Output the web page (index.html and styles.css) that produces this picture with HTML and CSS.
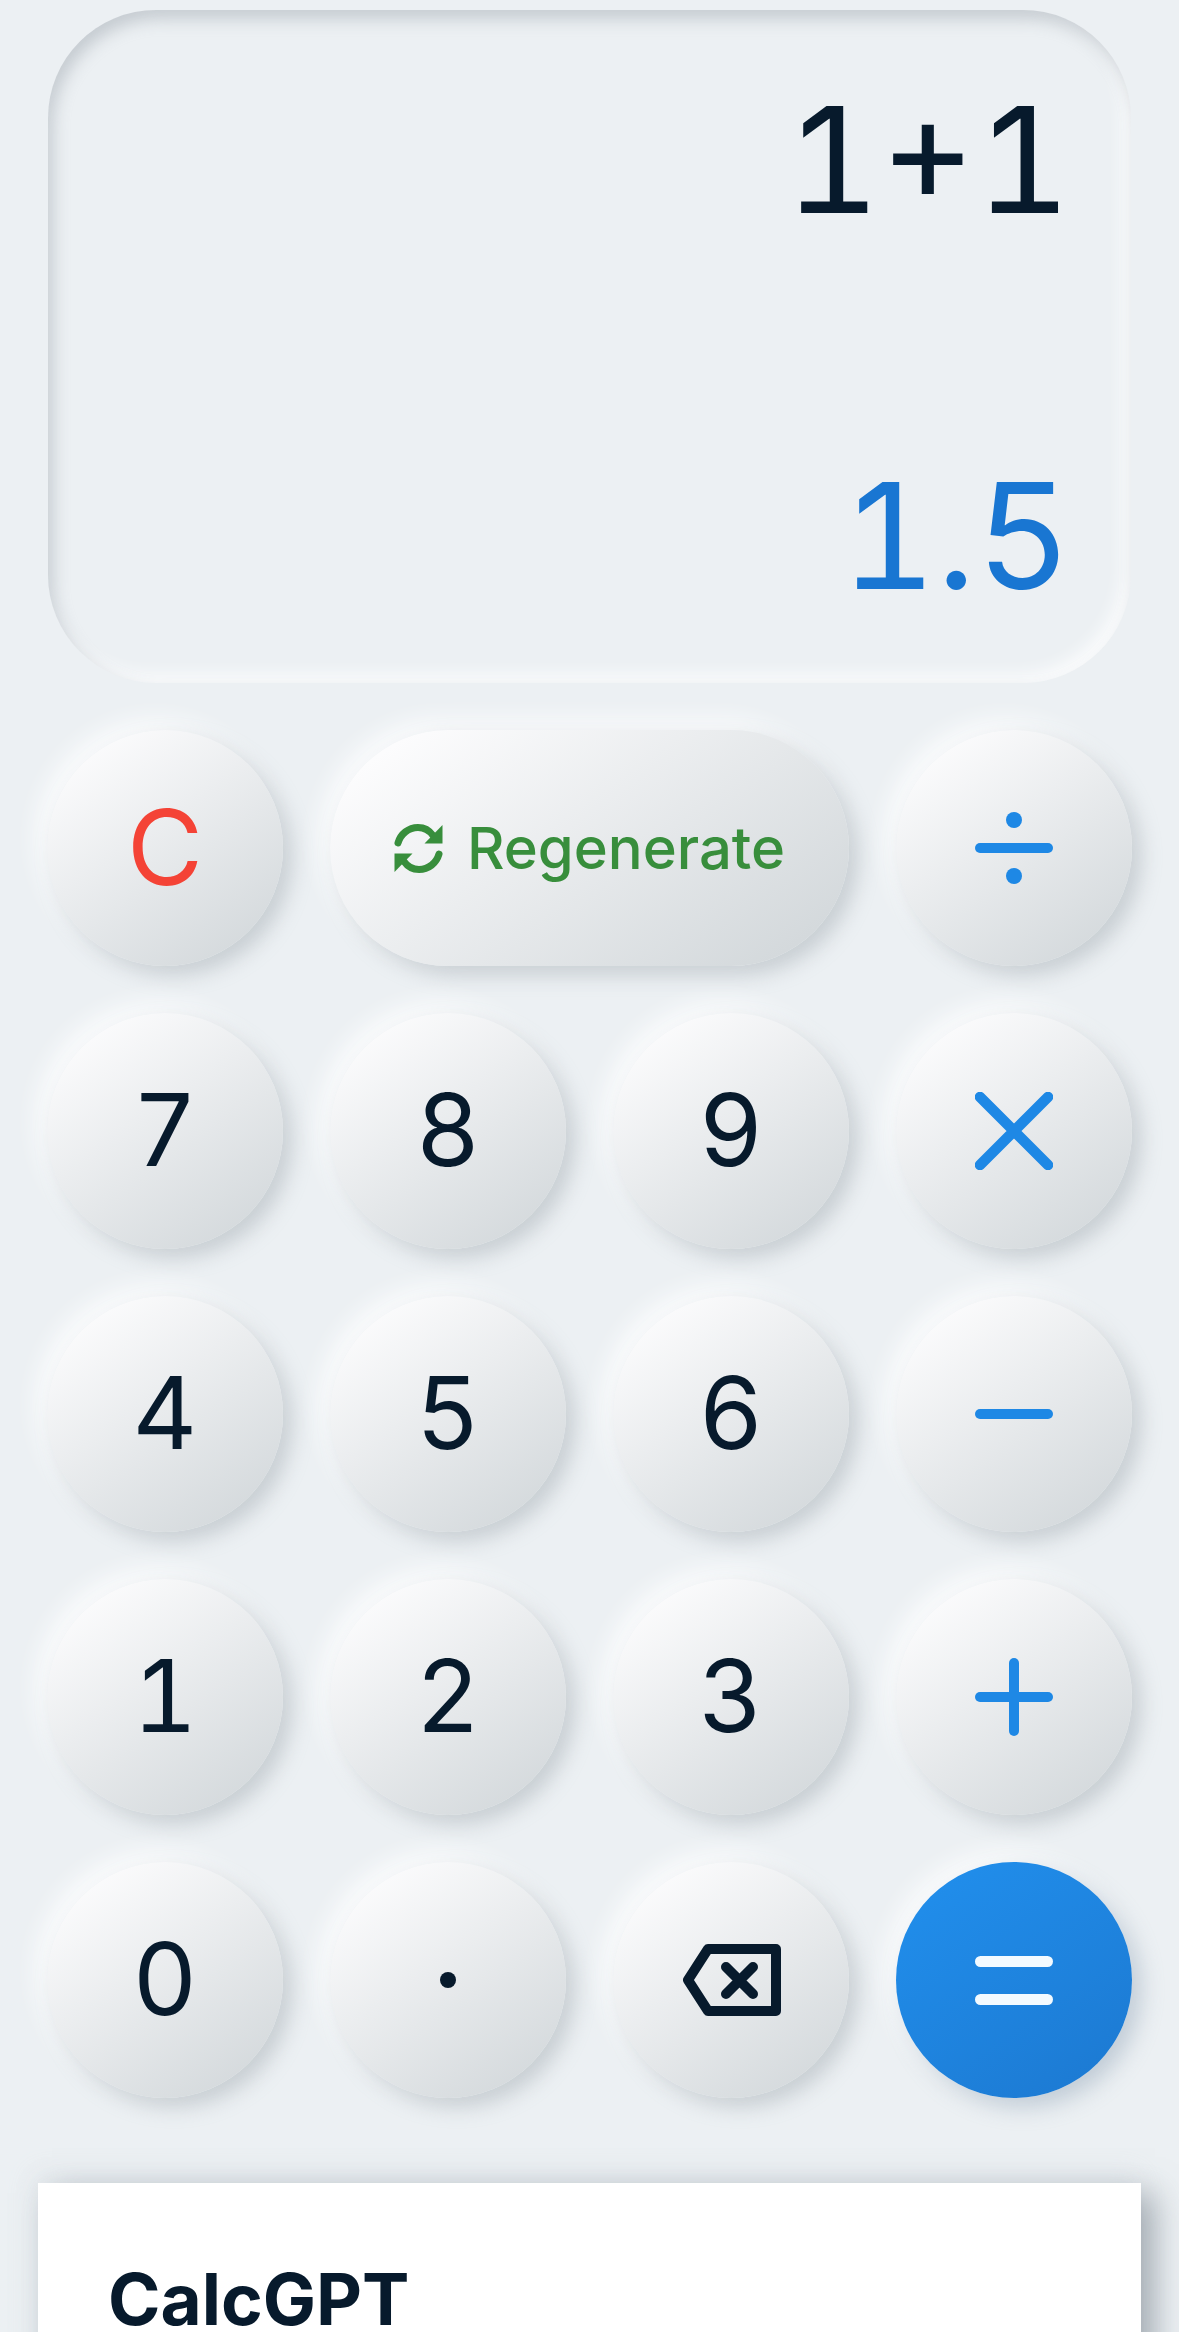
FILE: index.html
```html
<!DOCTYPE html>
<html lang="en">
<head>
    <meta charset="UTF-8">
    <meta name="viewport" content="width=device-width, initial-scale=1.0">
    <title>CalcGPT</title>
    <link rel="stylesheet" href="styles.css">
</head>
<body>
<div class="app">
    <!-- Display -->
    <div class="display">
        <div class="expression">1+1</div>
        <div class="result">1.5</div>
    </div>

    <!-- Keypad -->
    <div class="keypad">
        <button class="key clear">C</button>
        <button class="key regen">
            <svg class="regen-icon" viewBox="0 0 49 51">
                <g id="regenHalf">
                    <path d="M4 20C6.500 11 14.500 4.500 24 4.500C30.500 4.500 35.500 7.500 39 12.500" fill="none" stroke="#388e3c" stroke-width="7" stroke-linecap="round"/>
                    <polygon points="48.500,2 48.500,20.500 30.500,20.500" fill="#388e3c"/>
                </g>
                <use href="#regenHalf" transform="rotate(180 24.500 25.500)"/>
            </svg>
            Regenerate
        </button>
        <button class="key op">
            <svg class="op-icon" viewBox="0 0 78 78">
                <circle cx="39" cy="11" r="8"/>
                <rect x="0" y="34" width="78" height="10" rx="5"/>
                <circle cx="39" cy="67" r="8"/>
            </svg>
        </button>

        <button class="key">7</button>
        <button class="key">8</button>
        <button class="key">9</button>
        <button class="key op">
            <svg class="op-icon" viewBox="0 0 78 78">
                <path d="M5 5L73 73M73 5L5 73" fill="none" stroke="#1e88e5" stroke-width="10.500" stroke-linecap="round"/>
            </svg>
        </button>

        <button class="key">4</button>
        <button class="key">5</button>
        <button class="key">6</button>
        <button class="key op">
            <svg class="op-icon" viewBox="0 0 78 78">
                <rect x="0" y="34" width="78" height="10" rx="5"/>
            </svg>
        </button>

        <button class="key">1</button>
        <button class="key">2</button>
        <button class="key">3</button>
        <button class="key op">
            <svg class="op-icon" viewBox="0 0 78 78">
                <rect x="0" y="34" width="78" height="10" rx="5"/>
                <rect x="34" y="0" width="10" height="78" rx="5"/>
            </svg>
        </button>

        <button class="key">0</button>
        <button class="key">
            <svg class="dot-icon" viewBox="0 0 16 16"><circle cx="8" cy="8" r="8"/></svg>
        </button>
        <button class="key">
            <svg class="back-icon" viewBox="0 0 99 72">
                <path d="M26 5H94V67H26L6 36Z" fill="none" stroke="#071a2c" stroke-width="10" stroke-linejoin="round"/>
                <path d="M44 23L71 50M71 23L44 50" fill="none" stroke="#071a2c" stroke-width="10" stroke-linecap="round"/>
            </svg>
        </button>
        <button class="key equals">
            <svg class="op-icon" viewBox="0 0 78 78">
                <rect x="0" y="15" width="78" height="11" rx="5.500"/>
                <rect x="0" y="53" width="78" height="11" rx="5.500"/>
            </svg>
        </button>
    </div>

    <!-- Info card -->
    <div class="card">
        <h2>CalcGPT</h2>
    </div>
</div>
</body>
</html>
```

FILE: styles.css
```css
html, body {
    margin: 0;
    height: 2332px;
    overflow: hidden;
    background-color: #ecf0f3;
}
body {
    font-family: Inter, "Liberation Sans", sans-serif;
    color: #071a2c;
}
.app {
    padding: 10px 47px 0;
}
.display {
    height: 673px;
    margin: 0 1px;
    padding: 61px 60px 0 0;
    box-sizing: border-box;
    border-radius: 108px;
    text-align: right;
    font-size: 147px;
    line-height: 178px;
    font-feature-settings: "tnum";
    box-shadow: inset 5px 9px 16px rgba(150, 160, 168, 0.45), inset -8px -8px 16px #fbfcfd;
}
.expression {
    height: 376px;
}
.result {
    color: #1976d2;
}
.keypad {
    display: grid;
    grid-template-columns: repeat(4, 236px);
    grid-auto-rows: 236px;
    gap: 47px;
    margin-top: 47px;
}
.key {
    display: flex;
    align-items: center;
    justify-content: center;
    padding: 0 0 3px;
    border: none;
    border-radius: 118px;
    font-family: inherit;
    font-size: 100px;
    font-feature-settings: "tnum";
    color: #071a2c;
    background: linear-gradient(145deg, #fcfcfd 10%, #d4d9dc 90%);
    box-shadow: 9px 9px 20px rgba(150, 160, 168, 0.42), -10px -10px 22px #fbfcfd;
}
.key svg {
    margin-top: 3px;
}
.clear {
    font-size: 104px;
    color: #f44336;
}
.regen {
    grid-column: span 2;
    gap: 24px;
    padding: 0;
    font-size: 58px;
    font-weight: 500;
    color: #388e3c;
}
.regen .regen-icon {
    width: 49px;
    height: 51px;
    margin: 0;
}
.op-icon {
    width: 78px;
    height: 78px;
    fill: #1e88e5;
}
.dot-icon {
    width: 16px;
    height: 16px;
    fill: #071a2c;
}
.back-icon {
    width: 99px;
    height: 72px;
}
.equals {
    background: linear-gradient(145deg, #2190ee, #1c78d0);
    box-shadow: 9px 9px 22px rgba(140, 160, 180, 0.45), -10px -10px 22px #fbfcfd;
}
.equals .op-icon {
    fill: #f3faff;
}
.card {
    margin: 85px -9px 0;
    padding: 73px 70px 0;
    height: 400px;
    background: #fff;
    box-shadow: 14px 10px 30px rgba(120, 130, 140, 0.6), -3px -8px 24px rgba(210, 216, 222, 0.3);
}
.card h2 {
    margin: 0;
    font-size: 71px;
    line-height: 87px;
    font-weight: 700;
    color: #071a2c;
}
```
